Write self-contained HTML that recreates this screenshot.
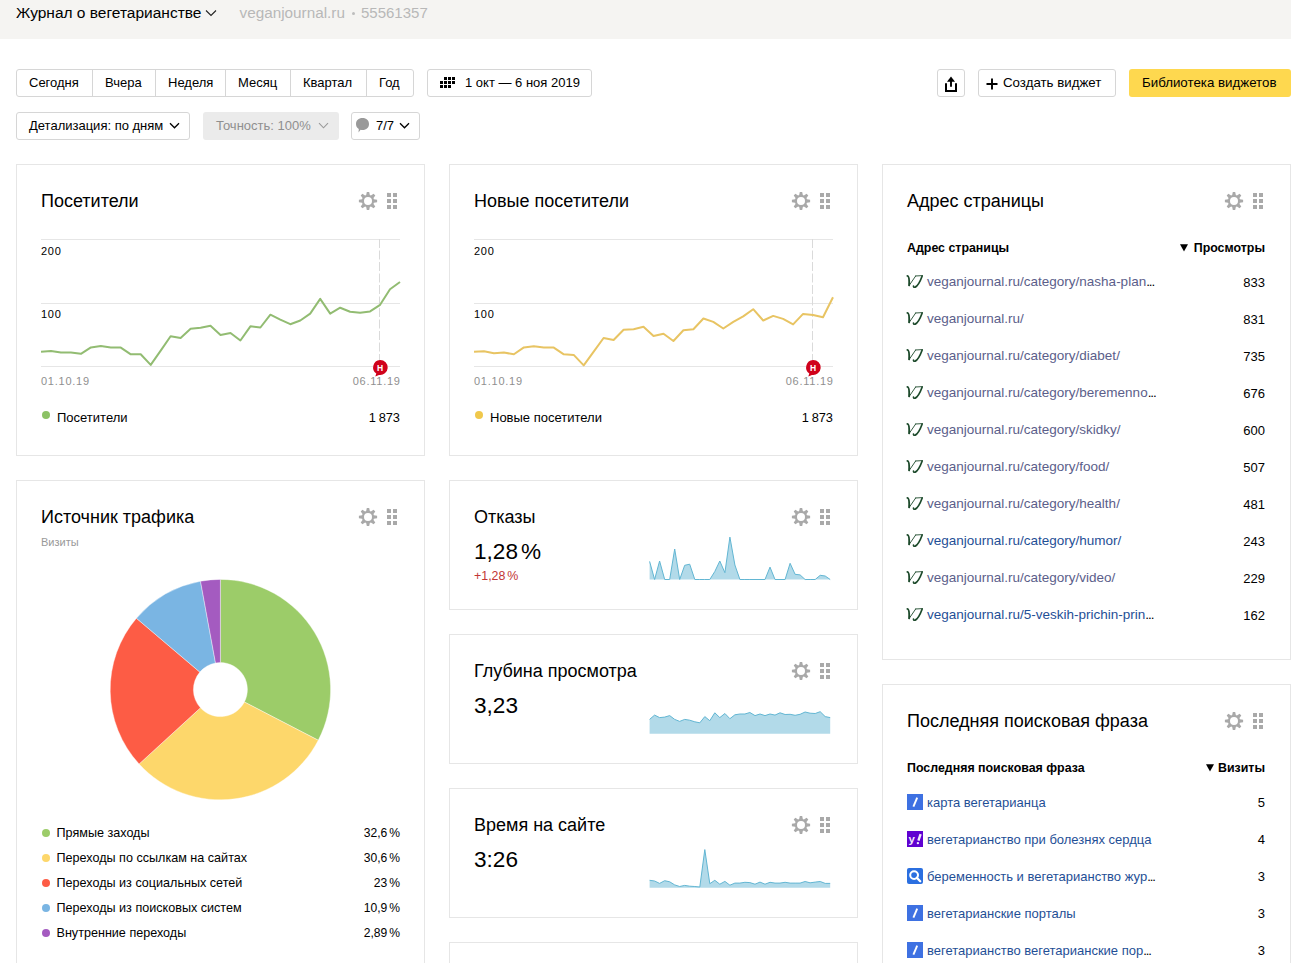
<!DOCTYPE html>
<html><head><meta charset="utf-8">
<style>
*{margin:0;padding:0;box-sizing:border-box}
html,body{width:1291px;height:963px;overflow:hidden;background:#fff}
body{position:relative;font-family:"Liberation Sans",sans-serif;color:#000}
.t{position:absolute;line-height:1;white-space:nowrap}
.r{text-align:right}
.hdr{position:absolute;left:0;top:0;width:1291px;height:39px;background:#f5f4f2}
.btn{position:absolute;height:28px;border:1px solid #d6d6d6;border-radius:3px;background:#fff}
.card{position:absolute;border:1px solid #e6e6e6;background:#fff}
.ttl{font-size:18px}
.gear{position:absolute;width:18px;height:18px}
.hand{position:absolute;width:10px;height:16px}
.grid{position:absolute;height:1px;background:#e6e6e6}
.ax{font-size:12px;font-family:"Liberation Sans",sans-serif}
.f13{font-size:13px}
.lnk{font-size:13px;color:#5b5f8b}
.lnkb{font-size:13px;color:#1f4f96}
.dot{position:absolute;width:8px;height:8px;border-radius:50%}
</style></head><body>
<div class="hdr"></div>
<div class="t" style="left:16px;top:5.2px;font-size:15.5px">Журнал о вегетарианстве</div>
<svg style="position:absolute;left:205px;top:9px" width="12" height="8" viewBox="0 0 12 8"><path d="M1,1.5 L6,6.5 L11,1.5" fill="none" stroke="#222" stroke-width="1.1"/></svg>
<div class="t" style="left:239.5px;top:5.2px;font-size:15.3px;color:#b8b8b8">veganjournal.ru</div><div style="position:absolute;left:351.5px;top:12px;width:3px;height:3px;border-radius:50%;background:#bdbdbd"></div><div class="t" style="left:361px;top:5.2px;font-size:15px;color:#b8b8b8">55561357</div>

<!-- row 1 buttons -->
<div class="btn" style="left:16px;top:69px;width:398px"></div>
<div style="position:absolute;left:92px;top:69px;width:1px;height:28px;background:#d6d6d6"></div>
<div style="position:absolute;left:155px;top:69px;width:1px;height:28px;background:#d6d6d6"></div>
<div style="position:absolute;left:225px;top:69px;width:1px;height:28px;background:#d6d6d6"></div>
<div style="position:absolute;left:290px;top:69px;width:1px;height:28px;background:#d6d6d6"></div>
<div style="position:absolute;left:366px;top:69px;width:1px;height:28px;background:#d6d6d6"></div>
<div class="t f13" style="left:29px;top:76px">Сегодня</div>
<div class="t f13" style="left:105px;top:76px">Вчера</div>
<div class="t f13" style="left:168px;top:76px">Неделя</div>
<div class="t f13" style="left:238px;top:76px">Месяц</div>
<div class="t f13" style="left:303px;top:76px">Квартал</div>
<div class="t f13" style="left:379px;top:76px">Год</div>

<div class="btn" style="left:427px;top:69px;width:165px"></div>
<svg style="position:absolute;left:440px;top:77px" width="15" height="11" viewBox="0 0 15 11"><g fill="#000"><rect x="4" y="0" width="3" height="3"/><rect x="8" y="0" width="3" height="3"/><rect x="12" y="0" width="3" height="3"/><rect x="0" y="4" width="3" height="3"/><rect x="4" y="4" width="3" height="3"/><rect x="8" y="4" width="3" height="3"/><rect x="12" y="4" width="3" height="3"/><rect x="0" y="8" width="3" height="3"/><rect x="4" y="8" width="3" height="3"/><rect x="8" y="8" width="3" height="3"/></g></svg>
<div class="t f13" style="left:465px;top:76px">1 окт — 6 ноя 2019</div>

<div class="btn" style="left:937px;top:69px;width:28px"></div>
<svg style="position:absolute;left:943px;top:74px" width="16" height="19" viewBox="0 0 16 19"><path d="M4,7.8 L8,2.6 L12,7.8 Z" fill="#000"/><path d="M8,7 V12.8" stroke="#000" stroke-width="1.9"/><path d="M3,9.3 V17 H13 V9.3" fill="none" stroke="#000" stroke-width="2"/></svg>
<div class="btn" style="left:978px;top:69px;width:138px"></div>
<svg style="position:absolute;left:986px;top:77.5px" width="12" height="12" viewBox="0 0 12 12"><path d="M6,0.5 V11.5 M0.5,6 H11.5" stroke="#000" stroke-width="1.9"/></svg>
<div class="t" style="left:1003px;top:75.8px;font-size:13.3px">Создать виджет</div>
<div style="position:absolute;left:1129px;top:69px;width:162px;height:28px;border-radius:3px;background:#fed84f"></div>
<div class="t" style="left:1142px;top:75.8px;font-size:13.3px">Библиотека виджетов</div>

<!-- row 2 -->
<div class="btn" style="left:16px;top:112px;width:174px"></div>
<div class="t f13" style="left:29px;top:119px">Детализация: по дням</div>
<svg style="position:absolute;left:169px;top:122px" width="12" height="8" viewBox="0 0 12 8"><path d="M1,1.2 L5.5,5.8 L10,1.2" fill="none" stroke="#000" stroke-width="1.3"/></svg>
<div style="position:absolute;left:203px;top:112px;width:136px;height:28px;border-radius:3px;background:#ebebeb"></div>
<div class="t f13" style="left:216px;top:119px;color:#8f8f8f">Точность: 100%</div>
<svg style="position:absolute;left:318px;top:122px" width="12" height="8" viewBox="0 0 12 8"><path d="M1,1.2 L5.5,5.8 L10,1.2" fill="none" stroke="#999" stroke-width="1.1"/></svg>
<div class="btn" style="left:351px;top:112px;width:69px"></div>
<svg style="position:absolute;left:355px;top:117px" width="16" height="18" viewBox="0 0 16 18"><path d="M7.5,1 C11.5,1 14,3.5 14,7 C14,10.5 11.5,13 7.5,13 C6.8,13 6.2,12.9 5.6,12.8 L3.5,15.5 L3.8,12 C2,11 1,9.2 1,7 C1,3.5 3.5,1 7.5,1 Z" fill="#999"/></svg>
<div class="t f13" style="left:376px;top:119px">7/7</div>
<svg style="position:absolute;left:399px;top:122px" width="12" height="8" viewBox="0 0 12 8"><path d="M1,1.2 L5.5,5.8 L10,1.2" fill="none" stroke="#000" stroke-width="1.3"/></svg>

<!-- CARDS START -->
<div class="card" style="left:16px;top:164px;width:409px;height:292px"></div>
<div class="t" style="top:191.76px;font-size:18px;left:41px;">Посетители</div>
<svg style="position:absolute;left:358px;top:191px" width="20" height="20" viewBox="0 0 20 20"><path d="M8.17,4.08 L8.81,0.88 L11.19,0.88 L11.83,4.08 L12.89,4.52 L15.61,2.71 L17.29,4.39 L15.48,7.11 L15.92,8.17 L19.12,8.81 L19.12,11.19 L15.92,11.83 L15.48,12.89 L17.29,15.61 L15.61,17.29 L12.89,15.48 L11.83,15.92 L11.19,19.12 L8.81,19.12 L8.17,15.92 L7.11,15.48 L4.39,17.29 L2.71,15.61 L4.52,12.89 L4.08,11.83 L0.88,11.19 L0.88,8.81 L4.08,8.17 L4.52,7.11 L2.71,4.39 L4.39,2.71 L7.11,4.52 Z M14.0,10 A4.0,4.0 0 1 0 6.0,10 A4.0,4.0 0 1 0 14.0,10 Z" fill="#a9a9a9" fill-rule="evenodd"/></svg><svg style="position:absolute;left:387px;top:193px" width="10" height="16" viewBox="0 0 10 16"><g fill="#a9a9a9"><rect x="0" y="0" width="4" height="4"/><rect x="6" y="0" width="4" height="4"/><rect x="0" y="6" width="4" height="4"/><rect x="6" y="6" width="4" height="4"/><rect x="0" y="12" width="4" height="4"/><rect x="6" y="12" width="4" height="4"/></g></svg>
<div class="grid" style="left:41px;top:239px;width:359px"></div>
<div class="grid" style="left:41px;top:303px;width:359px"></div>
<div class="grid" style="left:41px;top:366px;width:359px"></div>
<div class="t" style="top:245.69px;font-size:11px;left:41px;color:#000;letter-spacing:0.75px">200</div>
<div class="t" style="top:308.99px;font-size:11px;left:41px;color:#000;letter-spacing:0.75px">100</div>
<div class="t" style="top:375.99px;font-size:11px;left:41px;color:#8f8f8f;letter-spacing:0.75px">01.10.19</div>
<div class="t" style="top:375.99px;font-size:11px;right:890.3px;color:#8f8f8f;letter-spacing:0.75px">06.11.19</div>
<svg style="position:absolute;left:379px;top:239px" width="1" height="128"><line x1="0.5" y1="0" x2="0.5" y2="128" stroke="#dadada" stroke-dasharray="9,2.5"/></svg>
<svg style="position:absolute;left:41px;top:164px" width="362" height="220" viewBox="0 0 362 220"><polyline points="0.0,187.8 10.0,186.9 19.9,188.6 29.9,188.6 39.9,189.8 49.9,183.4 59.8,182.1 69.8,183.6 79.8,183.6 89.8,190.3 99.7,190.3 109.7,200.9 119.7,186.6 129.6,172.3 139.6,174.0 149.6,164.8 159.6,163.7 169.5,161.8 179.5,171.0 189.5,169.0 199.4,176.5 209.4,162.3 219.4,163.5 229.4,150.7 239.3,155.7 249.3,160.2 259.3,156.5 269.2,149.6 279.2,134.9 289.2,149.6 299.2,143.7 309.1,147.7 319.1,148.7 329.1,147.4 339.1,140.8 349.0,125.3 359.0,118.0" fill="none" stroke="#92bc72" stroke-width="2" stroke-linejoin="round"/></svg>
<svg style="position:absolute;left:371px;top:357.5px" width="18" height="20" viewBox="0 0 18 20"><path d="M9,2 A7.5,7.5 0 1 1 8,16.9 L4.3,18.6 L5.3,15.6 A7.5,7.5 0 0 1 9,2 Z" fill="#d0021b"/><text x="9" y="12.7" text-anchor="middle" font-family="Liberation Sans" font-weight="700" font-size="8.5" fill="#fff">Н</text></svg>
<div class="dot" style="left:42px;top:411px;background:#8cc265"></div>
<div class="t" style="top:411.00px;font-size:13px;left:57px;">Посетители</div>
<div class="t" style="top:412.16px;font-size:12.8px;right:891px;">1<span style="margin-left:2.8px">873</span></div>
<div class="card" style="left:449px;top:164px;width:409px;height:292px"></div>
<div class="t" style="top:191.76px;font-size:18px;left:474px;">Новые посетители</div>
<svg style="position:absolute;left:791px;top:191px" width="20" height="20" viewBox="0 0 20 20"><path d="M8.17,4.08 L8.81,0.88 L11.19,0.88 L11.83,4.08 L12.89,4.52 L15.61,2.71 L17.29,4.39 L15.48,7.11 L15.92,8.17 L19.12,8.81 L19.12,11.19 L15.92,11.83 L15.48,12.89 L17.29,15.61 L15.61,17.29 L12.89,15.48 L11.83,15.92 L11.19,19.12 L8.81,19.12 L8.17,15.92 L7.11,15.48 L4.39,17.29 L2.71,15.61 L4.52,12.89 L4.08,11.83 L0.88,11.19 L0.88,8.81 L4.08,8.17 L4.52,7.11 L2.71,4.39 L4.39,2.71 L7.11,4.52 Z M14.0,10 A4.0,4.0 0 1 0 6.0,10 A4.0,4.0 0 1 0 14.0,10 Z" fill="#a9a9a9" fill-rule="evenodd"/></svg><svg style="position:absolute;left:820px;top:193px" width="10" height="16" viewBox="0 0 10 16"><g fill="#a9a9a9"><rect x="0" y="0" width="4" height="4"/><rect x="6" y="0" width="4" height="4"/><rect x="0" y="6" width="4" height="4"/><rect x="6" y="6" width="4" height="4"/><rect x="0" y="12" width="4" height="4"/><rect x="6" y="12" width="4" height="4"/></g></svg>
<div class="grid" style="left:474px;top:239px;width:359px"></div>
<div class="grid" style="left:474px;top:303px;width:359px"></div>
<div class="grid" style="left:474px;top:366px;width:359px"></div>
<div class="t" style="top:245.69px;font-size:11px;left:474px;color:#000;letter-spacing:0.75px">200</div>
<div class="t" style="top:308.99px;font-size:11px;left:474px;color:#000;letter-spacing:0.75px">100</div>
<div class="t" style="top:375.99px;font-size:11px;left:474px;color:#8f8f8f;letter-spacing:0.75px">01.10.19</div>
<div class="t" style="top:375.99px;font-size:11px;right:457.29999999999995px;color:#8f8f8f;letter-spacing:0.75px">06.11.19</div>
<svg style="position:absolute;left:812px;top:239px" width="1" height="128"><line x1="0.5" y1="0" x2="0.5" y2="128" stroke="#dadada" stroke-dasharray="9,2.5"/></svg>
<svg style="position:absolute;left:474px;top:164px" width="362" height="220" viewBox="0 0 362 220"><polyline points="0.0,187.8 10.0,187.3 19.9,189.3 29.9,188.6 39.9,190.3 49.9,183.4 59.8,182.3 69.8,183.6 79.8,183.6 89.8,190.3 99.7,190.9 109.7,201.4 119.7,187.6 129.6,174.0 139.6,176.0 149.6,165.7 159.6,165.2 169.5,162.7 179.5,172.0 189.5,169.8 199.4,177.0 209.4,166.2 219.4,165.2 229.4,154.5 239.3,157.9 249.3,164.5 259.3,157.9 269.2,152.4 279.2,145.2 289.2,156.5 299.2,151.9 309.1,154.9 319.1,160.4 329.1,149.9 339.1,151.0 349.0,153.2 359.0,133.3" fill="none" stroke="#e8c463" stroke-width="2" stroke-linejoin="round"/></svg>
<svg style="position:absolute;left:804px;top:357.5px" width="18" height="20" viewBox="0 0 18 20"><path d="M9,2 A7.5,7.5 0 1 1 8,16.9 L4.3,18.6 L5.3,15.6 A7.5,7.5 0 0 1 9,2 Z" fill="#d0021b"/><text x="9" y="12.7" text-anchor="middle" font-family="Liberation Sans" font-weight="700" font-size="8.5" fill="#fff">Н</text></svg>
<div class="dot" style="left:475px;top:411px;background:#f0c84c"></div>
<div class="t" style="top:411.00px;font-size:13px;left:490px;">Новые посетители</div>
<div class="t" style="top:412.16px;font-size:12.8px;right:458px;">1<span style="margin-left:2.8px">873</span></div>
<div class="card" style="left:882px;top:164px;width:409px;height:496px"></div>
<div class="t" style="top:191.76px;font-size:18px;left:907px;">Адрес страницы</div>
<svg style="position:absolute;left:1224px;top:191px" width="20" height="20" viewBox="0 0 20 20"><path d="M8.17,4.08 L8.81,0.88 L11.19,0.88 L11.83,4.08 L12.89,4.52 L15.61,2.71 L17.29,4.39 L15.48,7.11 L15.92,8.17 L19.12,8.81 L19.12,11.19 L15.92,11.83 L15.48,12.89 L17.29,15.61 L15.61,17.29 L12.89,15.48 L11.83,15.92 L11.19,19.12 L8.81,19.12 L8.17,15.92 L7.11,15.48 L4.39,17.29 L2.71,15.61 L4.52,12.89 L4.08,11.83 L0.88,11.19 L0.88,8.81 L4.08,8.17 L4.52,7.11 L2.71,4.39 L4.39,2.71 L7.11,4.52 Z M14.0,10 A4.0,4.0 0 1 0 6.0,10 A4.0,4.0 0 1 0 14.0,10 Z" fill="#a9a9a9" fill-rule="evenodd"/></svg><svg style="position:absolute;left:1253px;top:193px" width="10" height="16" viewBox="0 0 10 16"><g fill="#a9a9a9"><rect x="0" y="0" width="4" height="4"/><rect x="6" y="0" width="4" height="4"/><rect x="0" y="6" width="4" height="4"/><rect x="6" y="6" width="4" height="4"/><rect x="0" y="12" width="4" height="4"/><rect x="6" y="12" width="4" height="4"/></g></svg>
<div class="t" style="top:241.50px;font-size:12.4px;left:907px;font-weight:700;">Адрес страницы</div>
<div class="t" style="top:241.50px;font-size:12.4px;right:26px;font-weight:700;">Просмотры</div>
<svg style="position:absolute;left:1180px;top:244px" width="8" height="8" viewBox="0 0 8 8"><path d="M0,0.3 H8 L4,7.6 Z" fill="#000"/></svg>
<svg style="position:absolute;left:906px;top:274.0px" width="18" height="16" viewBox="0 0 18 16"><g fill="none" stroke="#1d4a2b" stroke-linecap="round"><path d="M1.4,1.9 Q3.6,2.2 3.1,11.4" stroke-width="1.9"/><path d="M3.2,11.4 L9.6,2.1" stroke-width="0.9"/><path d="M9.4,2.0 L16.6,1.6" stroke-width="0.9"/><path d="M16.1,2.2 Q12.6,11.6 9.2,13.1 Q7.6,13.6 7.5,12.2" stroke-width="1.7"/></g></svg>
<div class="t" style="top:275.07px;font-size:13.5px;left:927px;color:#5b5e8a;">veganjournal.ru/category/nasha-plan<span style="letter-spacing:-1.1px;color:#000">...</span></div>
<div class="t" style="top:275.50px;font-size:13px;right:26px;">833</div>
<svg style="position:absolute;left:906px;top:311.0px" width="18" height="16" viewBox="0 0 18 16"><g fill="none" stroke="#1d4a2b" stroke-linecap="round"><path d="M1.4,1.9 Q3.6,2.2 3.1,11.4" stroke-width="1.9"/><path d="M3.2,11.4 L9.6,2.1" stroke-width="0.9"/><path d="M9.4,2.0 L16.6,1.6" stroke-width="0.9"/><path d="M16.1,2.2 Q12.6,11.6 9.2,13.1 Q7.6,13.6 7.5,12.2" stroke-width="1.7"/></g></svg>
<div class="t" style="top:312.07px;font-size:13.5px;left:927px;color:#5b5e8a;">veganjournal.ru/</div>
<div class="t" style="top:312.50px;font-size:13px;right:26px;">831</div>
<svg style="position:absolute;left:906px;top:348.0px" width="18" height="16" viewBox="0 0 18 16"><g fill="none" stroke="#1d4a2b" stroke-linecap="round"><path d="M1.4,1.9 Q3.6,2.2 3.1,11.4" stroke-width="1.9"/><path d="M3.2,11.4 L9.6,2.1" stroke-width="0.9"/><path d="M9.4,2.0 L16.6,1.6" stroke-width="0.9"/><path d="M16.1,2.2 Q12.6,11.6 9.2,13.1 Q7.6,13.6 7.5,12.2" stroke-width="1.7"/></g></svg>
<div class="t" style="top:349.07px;font-size:13.5px;left:927px;color:#5b5e8a;">veganjournal.ru/category/diabet/</div>
<div class="t" style="top:349.50px;font-size:13px;right:26px;">735</div>
<svg style="position:absolute;left:906px;top:385.0px" width="18" height="16" viewBox="0 0 18 16"><g fill="none" stroke="#1d4a2b" stroke-linecap="round"><path d="M1.4,1.9 Q3.6,2.2 3.1,11.4" stroke-width="1.9"/><path d="M3.2,11.4 L9.6,2.1" stroke-width="0.9"/><path d="M9.4,2.0 L16.6,1.6" stroke-width="0.9"/><path d="M16.1,2.2 Q12.6,11.6 9.2,13.1 Q7.6,13.6 7.5,12.2" stroke-width="1.7"/></g></svg>
<div class="t" style="top:386.07px;font-size:13.5px;left:927px;color:#5b5e8a;">veganjournal.ru/category/beremenno<span style="letter-spacing:-1.1px;color:#000">...</span></div>
<div class="t" style="top:386.50px;font-size:13px;right:26px;">676</div>
<svg style="position:absolute;left:906px;top:422.0px" width="18" height="16" viewBox="0 0 18 16"><g fill="none" stroke="#1d4a2b" stroke-linecap="round"><path d="M1.4,1.9 Q3.6,2.2 3.1,11.4" stroke-width="1.9"/><path d="M3.2,11.4 L9.6,2.1" stroke-width="0.9"/><path d="M9.4,2.0 L16.6,1.6" stroke-width="0.9"/><path d="M16.1,2.2 Q12.6,11.6 9.2,13.1 Q7.6,13.6 7.5,12.2" stroke-width="1.7"/></g></svg>
<div class="t" style="top:423.07px;font-size:13.5px;left:927px;color:#5b5e8a;">veganjournal.ru/category/skidky/</div>
<div class="t" style="top:423.50px;font-size:13px;right:26px;">600</div>
<svg style="position:absolute;left:906px;top:459.0px" width="18" height="16" viewBox="0 0 18 16"><g fill="none" stroke="#1d4a2b" stroke-linecap="round"><path d="M1.4,1.9 Q3.6,2.2 3.1,11.4" stroke-width="1.9"/><path d="M3.2,11.4 L9.6,2.1" stroke-width="0.9"/><path d="M9.4,2.0 L16.6,1.6" stroke-width="0.9"/><path d="M16.1,2.2 Q12.6,11.6 9.2,13.1 Q7.6,13.6 7.5,12.2" stroke-width="1.7"/></g></svg>
<div class="t" style="top:460.07px;font-size:13.5px;left:927px;color:#5b5e8a;">veganjournal.ru/category/food/</div>
<div class="t" style="top:460.50px;font-size:13px;right:26px;">507</div>
<svg style="position:absolute;left:906px;top:496.0px" width="18" height="16" viewBox="0 0 18 16"><g fill="none" stroke="#1d4a2b" stroke-linecap="round"><path d="M1.4,1.9 Q3.6,2.2 3.1,11.4" stroke-width="1.9"/><path d="M3.2,11.4 L9.6,2.1" stroke-width="0.9"/><path d="M9.4,2.0 L16.6,1.6" stroke-width="0.9"/><path d="M16.1,2.2 Q12.6,11.6 9.2,13.1 Q7.6,13.6 7.5,12.2" stroke-width="1.7"/></g></svg>
<div class="t" style="top:497.07px;font-size:13.5px;left:927px;color:#5b5e8a;">veganjournal.ru/category/health/</div>
<div class="t" style="top:497.50px;font-size:13px;right:26px;">481</div>
<svg style="position:absolute;left:906px;top:533.0px" width="18" height="16" viewBox="0 0 18 16"><g fill="none" stroke="#1d4a2b" stroke-linecap="round"><path d="M1.4,1.9 Q3.6,2.2 3.1,11.4" stroke-width="1.9"/><path d="M3.2,11.4 L9.6,2.1" stroke-width="0.9"/><path d="M9.4,2.0 L16.6,1.6" stroke-width="0.9"/><path d="M16.1,2.2 Q12.6,11.6 9.2,13.1 Q7.6,13.6 7.5,12.2" stroke-width="1.7"/></g></svg>
<div class="t" style="top:534.07px;font-size:13.5px;left:927px;color:#1f4f96;">veganjournal.ru/category/humor/</div>
<div class="t" style="top:534.50px;font-size:13px;right:26px;">243</div>
<svg style="position:absolute;left:906px;top:570.0px" width="18" height="16" viewBox="0 0 18 16"><g fill="none" stroke="#1d4a2b" stroke-linecap="round"><path d="M1.4,1.9 Q3.6,2.2 3.1,11.4" stroke-width="1.9"/><path d="M3.2,11.4 L9.6,2.1" stroke-width="0.9"/><path d="M9.4,2.0 L16.6,1.6" stroke-width="0.9"/><path d="M16.1,2.2 Q12.6,11.6 9.2,13.1 Q7.6,13.6 7.5,12.2" stroke-width="1.7"/></g></svg>
<div class="t" style="top:571.07px;font-size:13.5px;left:927px;color:#5b5e8a;">veganjournal.ru/category/video/</div>
<div class="t" style="top:571.50px;font-size:13px;right:26px;">229</div>
<svg style="position:absolute;left:906px;top:607.0px" width="18" height="16" viewBox="0 0 18 16"><g fill="none" stroke="#1d4a2b" stroke-linecap="round"><path d="M1.4,1.9 Q3.6,2.2 3.1,11.4" stroke-width="1.9"/><path d="M3.2,11.4 L9.6,2.1" stroke-width="0.9"/><path d="M9.4,2.0 L16.6,1.6" stroke-width="0.9"/><path d="M16.1,2.2 Q12.6,11.6 9.2,13.1 Q7.6,13.6 7.5,12.2" stroke-width="1.7"/></g></svg>
<div class="t" style="top:608.07px;font-size:13.5px;left:927px;color:#1f4f96;">veganjournal.ru/5-veskih-prichin-prin<span style="letter-spacing:-1.1px;color:#000">...</span></div>
<div class="t" style="top:608.50px;font-size:13px;right:26px;">162</div>
<div class="card" style="left:882px;top:684px;width:409px;height:300px"></div>
<div class="t" style="top:711.76px;font-size:18px;left:907px;">Последняя поисковая фраза</div>
<svg style="position:absolute;left:1224px;top:711px" width="20" height="20" viewBox="0 0 20 20"><path d="M8.17,4.08 L8.81,0.88 L11.19,0.88 L11.83,4.08 L12.89,4.52 L15.61,2.71 L17.29,4.39 L15.48,7.11 L15.92,8.17 L19.12,8.81 L19.12,11.19 L15.92,11.83 L15.48,12.89 L17.29,15.61 L15.61,17.29 L12.89,15.48 L11.83,15.92 L11.19,19.12 L8.81,19.12 L8.17,15.92 L7.11,15.48 L4.39,17.29 L2.71,15.61 L4.52,12.89 L4.08,11.83 L0.88,11.19 L0.88,8.81 L4.08,8.17 L4.52,7.11 L2.71,4.39 L4.39,2.71 L7.11,4.52 Z M14.0,10 A4.0,4.0 0 1 0 6.0,10 A4.0,4.0 0 1 0 14.0,10 Z" fill="#a9a9a9" fill-rule="evenodd"/></svg><svg style="position:absolute;left:1253px;top:713px" width="10" height="16" viewBox="0 0 10 16"><g fill="#a9a9a9"><rect x="0" y="0" width="4" height="4"/><rect x="6" y="0" width="4" height="4"/><rect x="0" y="6" width="4" height="4"/><rect x="6" y="6" width="4" height="4"/><rect x="0" y="12" width="4" height="4"/><rect x="6" y="12" width="4" height="4"/></g></svg>
<div class="t" style="top:761.50px;font-size:12.4px;left:907px;font-weight:700;">Последняя поисковая фраза</div>
<div class="t" style="top:761.50px;font-size:12.4px;right:26px;font-weight:700;">Визиты</div>
<svg style="position:absolute;left:1206px;top:764px" width="8" height="8" viewBox="0 0 8 8"><path d="M0,0.3 H8 L4,7.6 Z" fill="#000"/></svg>
<svg style="position:absolute;left:907px;top:794.0px" width="16" height="16" viewBox="0 0 16 16"><rect width="16" height="16" fill="#3e71e2"/><path d="M10.2,3.6 L6.4,12.6" stroke="#fff" stroke-width="1.9"/></svg>
<div class="t" style="top:795.50px;font-size:13px;left:927px;color:#1f4f96;">карта вегетарианца</div>
<div class="t" style="top:795.50px;font-size:13px;right:26px;">5</div>
<svg style="position:absolute;left:907px;top:831.0px" width="16" height="16" viewBox="0 0 16 16"><rect width="16" height="16" fill="#5f01d1"/><text x="1.6" y="12.2" font-family="Liberation Sans" font-weight="700" font-size="11.5" fill="#f0e8fa">y</text><path d="M13.6,3.2 L11.4,9.6" stroke="#f0e8fa" stroke-width="2.4"/><circle cx="10.9" cy="12.1" r="1.2" fill="#f0e8fa"/></svg>
<div class="t" style="top:832.50px;font-size:13px;left:927px;color:#1f4f96;">вегетарианство при болезнях сердца</div>
<div class="t" style="top:832.50px;font-size:13px;right:26px;">4</div>
<svg style="position:absolute;left:907px;top:868.0px" width="16" height="16" viewBox="0 0 16 16"><rect width="16" height="16" rx="2" fill="#2b6fe0"/><circle cx="7.1" cy="7.1" r="3.9" fill="none" stroke="#fff" stroke-width="2"/><path d="M9.8,9.8 L13.2,13.2" stroke="#fff" stroke-width="2.3" stroke-linecap="round"/></svg>
<div class="t" style="top:869.50px;font-size:13px;left:927px;color:#1f4f96;">беременность и вегетарианство жур<span style="letter-spacing:-1.1px;color:#000">...</span></div>
<div class="t" style="top:869.50px;font-size:13px;right:26px;">3</div>
<svg style="position:absolute;left:907px;top:905.0px" width="16" height="16" viewBox="0 0 16 16"><rect width="16" height="16" fill="#3e71e2"/><path d="M10.2,3.6 L6.4,12.6" stroke="#fff" stroke-width="1.9"/></svg>
<div class="t" style="top:906.50px;font-size:13px;left:927px;color:#1f4f96;">вегетарианские порталы</div>
<div class="t" style="top:906.50px;font-size:13px;right:26px;">3</div>
<svg style="position:absolute;left:907px;top:942.0px" width="16" height="16" viewBox="0 0 16 16"><rect width="16" height="16" fill="#3e71e2"/><path d="M10.2,3.6 L6.4,12.6" stroke="#fff" stroke-width="1.9"/></svg>
<div class="t" style="top:943.50px;font-size:13px;left:927px;color:#1f4f96;">вегетарианство вегетарианские пор<span style="letter-spacing:-1.1px;color:#000">...</span></div>
<div class="t" style="top:943.50px;font-size:13px;right:26px;">3</div>
<div class="card" style="left:16px;top:480px;width:409px;height:500px"></div>
<div class="t" style="top:507.76px;font-size:18px;left:41px;">Источник трафика</div>
<svg style="position:absolute;left:358px;top:507px" width="20" height="20" viewBox="0 0 20 20"><path d="M8.17,4.08 L8.81,0.88 L11.19,0.88 L11.83,4.08 L12.89,4.52 L15.61,2.71 L17.29,4.39 L15.48,7.11 L15.92,8.17 L19.12,8.81 L19.12,11.19 L15.92,11.83 L15.48,12.89 L17.29,15.61 L15.61,17.29 L12.89,15.48 L11.83,15.92 L11.19,19.12 L8.81,19.12 L8.17,15.92 L7.11,15.48 L4.39,17.29 L2.71,15.61 L4.52,12.89 L4.08,11.83 L0.88,11.19 L0.88,8.81 L4.08,8.17 L4.52,7.11 L2.71,4.39 L4.39,2.71 L7.11,4.52 Z M14.0,10 A4.0,4.0 0 1 0 6.0,10 A4.0,4.0 0 1 0 14.0,10 Z" fill="#a9a9a9" fill-rule="evenodd"/></svg><svg style="position:absolute;left:387px;top:509px" width="10" height="16" viewBox="0 0 10 16"><g fill="#a9a9a9"><rect x="0" y="0" width="4" height="4"/><rect x="6" y="0" width="4" height="4"/><rect x="0" y="6" width="4" height="4"/><rect x="6" y="6" width="4" height="4"/><rect x="0" y="12" width="4" height="4"/><rect x="6" y="12" width="4" height="4"/></g></svg>
<div class="t" style="top:536.69px;font-size:11px;left:41px;color:#999;">Визиты</div>
<svg style="position:absolute;left:16px;top:480px" width="409" height="330" viewBox="0 0 409 330"><g stroke="#fff" stroke-width="0.4"><path d="M204.40,99.40 A110.2,110.2 0 0 1 302.26,260.27 L228.38,222.01 A27,27 0 0 0 204.40,182.60 Z" fill="#9ccc69"/>
<path d="M302.26,260.27 A110.2,110.2 0 0 1 123.10,283.99 L184.48,227.83 A27,27 0 0 0 228.38,222.01 Z" fill="#fdd76b"/>
<path d="M123.10,283.99 A110.2,110.2 0 0 1 120.42,138.25 L183.82,192.12 A27,27 0 0 0 184.48,227.83 Z" fill="#fd5c45"/>
<path d="M120.42,138.25 A110.2,110.2 0 0 1 184.50,101.21 L199.52,183.04 A27,27 0 0 0 183.82,192.12 Z" fill="#7ab5e3"/>
<path d="M184.50,101.21 A110.2,110.2 0 0 1 204.40,99.40 L204.40,182.60 A27,27 0 0 0 199.52,183.04 Z" fill="#a45bc0"/></g></svg>
<div class="dot" style="left:42px;top:828.8px;background:#9ccc69"></div>
<div class="t" style="top:827.23px;font-size:12.6px;left:56.5px;">Прямые заходы</div>
<div class="t" style="top:827.06px;font-size:12.1px;right:891px;">32,6<span style="margin-left:2px">%</span></div>
<div class="dot" style="left:42px;top:853.8px;background:#fdd76b"></div>
<div class="t" style="top:852.23px;font-size:12.6px;left:56.5px;">Переходы по ссылкам на сайтах</div>
<div class="t" style="top:852.06px;font-size:12.1px;right:891px;">30,6<span style="margin-left:2px">%</span></div>
<div class="dot" style="left:42px;top:878.8px;background:#fd5c45"></div>
<div class="t" style="top:877.23px;font-size:12.6px;left:56.5px;">Переходы из социальных сетей</div>
<div class="t" style="top:877.06px;font-size:12.1px;right:891px;">23<span style="margin-left:2px">%</span></div>
<div class="dot" style="left:42px;top:903.8px;background:#7ab5e3"></div>
<div class="t" style="top:902.23px;font-size:12.6px;left:56.5px;">Переходы из поисковых систем</div>
<div class="t" style="top:902.06px;font-size:12.1px;right:891px;">10,9<span style="margin-left:2px">%</span></div>
<div class="dot" style="left:42px;top:928.8px;background:#a45bc0"></div>
<div class="t" style="top:927.23px;font-size:12.6px;left:56.5px;">Внутренние переходы</div>
<div class="t" style="top:927.06px;font-size:12.1px;right:891px;">2,89<span style="margin-left:2px">%</span></div>
<div class="card" style="left:449px;top:480px;width:409px;height:130px"></div>
<div class="t" style="top:507.76px;font-size:18px;left:474px;">Отказы</div>
<svg style="position:absolute;left:791px;top:507px" width="20" height="20" viewBox="0 0 20 20"><path d="M8.17,4.08 L8.81,0.88 L11.19,0.88 L11.83,4.08 L12.89,4.52 L15.61,2.71 L17.29,4.39 L15.48,7.11 L15.92,8.17 L19.12,8.81 L19.12,11.19 L15.92,11.83 L15.48,12.89 L17.29,15.61 L15.61,17.29 L12.89,15.48 L11.83,15.92 L11.19,19.12 L8.81,19.12 L8.17,15.92 L7.11,15.48 L4.39,17.29 L2.71,15.61 L4.52,12.89 L4.08,11.83 L0.88,11.19 L0.88,8.81 L4.08,8.17 L4.52,7.11 L2.71,4.39 L4.39,2.71 L7.11,4.52 Z M14.0,10 A4.0,4.0 0 1 0 6.0,10 A4.0,4.0 0 1 0 14.0,10 Z" fill="#a9a9a9" fill-rule="evenodd"/></svg><svg style="position:absolute;left:820px;top:509px" width="10" height="16" viewBox="0 0 10 16"><g fill="#a9a9a9"><rect x="0" y="0" width="4" height="4"/><rect x="6" y="0" width="4" height="4"/><rect x="0" y="6" width="4" height="4"/><rect x="6" y="6" width="4" height="4"/><rect x="0" y="12" width="4" height="4"/><rect x="6" y="12" width="4" height="4"/></g></svg>
<div class="t" style="top:541.47px;font-size:22.6px;left:474px;">1,28<span style="margin-left:3px">%</span></div>
<div class="t" style="top:570.30px;font-size:12.4px;left:474px;color:#c23434;">+1,28<span style="margin-left:2px">%</span></div>
<svg style="position:absolute;left:449px;top:480px" width="409" height="130" viewBox="0 0 409 130"><path d="M200.6,99.5 L200.6,81.4 L205.6,99.5 L210.6,81.0 L215.7,99.5 L220.7,99.5 L225.7,69.0 L230.7,99.5 L235.7,85.3 L240.7,84.2 L245.8,99.5 L250.8,99.5 L255.8,99.5 L260.8,99.5 L265.8,91.5 L270.8,81.0 L275.9,92.7 L280.9,57.1 L285.9,85.0 L290.9,99.5 L295.9,99.5 L300.9,99.5 L306.0,99.5 L311.0,99.5 L316.0,99.5 L321.0,87.1 L326.0,99.5 L331.0,99.5 L336.1,99.5 L341.1,83.3 L346.1,94.3 L351.1,94.9 L356.1,99.5 L361.1,99.5 L366.2,99.5 L371.2,95.3 L376.2,96.0 L381.2,99.5 L381.2,99.5 Z" fill="#b2dae9"/><path d="M200.6,81.4 L205.6,99.5 L210.6,81.0 L215.7,99.5 L220.7,99.5 L225.7,69.0 L230.7,99.5 L235.7,85.3 L240.7,84.2 L245.8,99.5 L250.8,99.5 L255.8,99.5 L260.8,99.5 L265.8,91.5 L270.8,81.0 L275.9,92.7 L280.9,57.1 L285.9,85.0 L290.9,99.5 L295.9,99.5 L300.9,99.5 L306.0,99.5 L311.0,99.5 L316.0,99.5 L321.0,87.1 L326.0,99.5 L331.0,99.5 L336.1,99.5 L341.1,83.3 L346.1,94.3 L351.1,94.9 L356.1,99.5 L361.1,99.5 L366.2,99.5 L371.2,95.3 L376.2,96.0 L381.2,99.5" fill="none" stroke="#62b6d3" stroke-width="1"/></svg>
<div class="card" style="left:449px;top:634px;width:409px;height:130px"></div>
<div class="t" style="top:661.76px;font-size:18px;left:474px;">Глубина просмотра</div>
<svg style="position:absolute;left:791px;top:661px" width="20" height="20" viewBox="0 0 20 20"><path d="M8.17,4.08 L8.81,0.88 L11.19,0.88 L11.83,4.08 L12.89,4.52 L15.61,2.71 L17.29,4.39 L15.48,7.11 L15.92,8.17 L19.12,8.81 L19.12,11.19 L15.92,11.83 L15.48,12.89 L17.29,15.61 L15.61,17.29 L12.89,15.48 L11.83,15.92 L11.19,19.12 L8.81,19.12 L8.17,15.92 L7.11,15.48 L4.39,17.29 L2.71,15.61 L4.52,12.89 L4.08,11.83 L0.88,11.19 L0.88,8.81 L4.08,8.17 L4.52,7.11 L2.71,4.39 L4.39,2.71 L7.11,4.52 Z M14.0,10 A4.0,4.0 0 1 0 6.0,10 A4.0,4.0 0 1 0 14.0,10 Z" fill="#a9a9a9" fill-rule="evenodd"/></svg><svg style="position:absolute;left:820px;top:663px" width="10" height="16" viewBox="0 0 10 16"><g fill="#a9a9a9"><rect x="0" y="0" width="4" height="4"/><rect x="6" y="0" width="4" height="4"/><rect x="0" y="6" width="4" height="4"/><rect x="6" y="6" width="4" height="4"/><rect x="0" y="12" width="4" height="4"/><rect x="6" y="12" width="4" height="4"/></g></svg>
<div class="t" style="top:695.47px;font-size:22.6px;left:474px;">3,23</div>
<svg style="position:absolute;left:449px;top:634px" width="409" height="130" viewBox="0 0 409 130"><path d="M200.6,99.8 L200.6,85.4 L205.6,81.1 L210.6,83.6 L215.7,83.1 L220.7,81.6 L225.7,85.4 L230.7,87.4 L235.7,85.4 L240.7,86.2 L245.8,87.8 L250.8,88.8 L255.8,82.6 L260.8,86.7 L265.8,78.8 L270.8,83.6 L275.9,79.5 L280.9,84.7 L285.9,80.8 L290.9,80.0 L295.9,80.0 L300.9,78.5 L306.0,81.6 L311.0,80.0 L316.0,81.6 L321.0,80.0 L326.0,81.1 L331.0,78.8 L336.1,80.5 L341.1,80.3 L346.1,81.3 L351.1,80.3 L356.1,78.0 L361.1,79.2 L366.2,79.5 L371.2,77.7 L376.2,82.6 L381.2,83.6 L381.2,99.8 Z" fill="#b2dae9"/><path d="M200.6,85.4 L205.6,81.1 L210.6,83.6 L215.7,83.1 L220.7,81.6 L225.7,85.4 L230.7,87.4 L235.7,85.4 L240.7,86.2 L245.8,87.8 L250.8,88.8 L255.8,82.6 L260.8,86.7 L265.8,78.8 L270.8,83.6 L275.9,79.5 L280.9,84.7 L285.9,80.8 L290.9,80.0 L295.9,80.0 L300.9,78.5 L306.0,81.6 L311.0,80.0 L316.0,81.6 L321.0,80.0 L326.0,81.1 L331.0,78.8 L336.1,80.5 L341.1,80.3 L346.1,81.3 L351.1,80.3 L356.1,78.0 L361.1,79.2 L366.2,79.5 L371.2,77.7 L376.2,82.6 L381.2,83.6" fill="none" stroke="#62b6d3" stroke-width="1"/></svg>
<div class="card" style="left:449px;top:788px;width:409px;height:130px"></div>
<div class="t" style="top:815.76px;font-size:18px;left:474px;">Время на сайте</div>
<svg style="position:absolute;left:791px;top:815px" width="20" height="20" viewBox="0 0 20 20"><path d="M8.17,4.08 L8.81,0.88 L11.19,0.88 L11.83,4.08 L12.89,4.52 L15.61,2.71 L17.29,4.39 L15.48,7.11 L15.92,8.17 L19.12,8.81 L19.12,11.19 L15.92,11.83 L15.48,12.89 L17.29,15.61 L15.61,17.29 L12.89,15.48 L11.83,15.92 L11.19,19.12 L8.81,19.12 L8.17,15.92 L7.11,15.48 L4.39,17.29 L2.71,15.61 L4.52,12.89 L4.08,11.83 L0.88,11.19 L0.88,8.81 L4.08,8.17 L4.52,7.11 L2.71,4.39 L4.39,2.71 L7.11,4.52 Z M14.0,10 A4.0,4.0 0 1 0 6.0,10 A4.0,4.0 0 1 0 14.0,10 Z" fill="#a9a9a9" fill-rule="evenodd"/></svg><svg style="position:absolute;left:820px;top:817px" width="10" height="16" viewBox="0 0 10 16"><g fill="#a9a9a9"><rect x="0" y="0" width="4" height="4"/><rect x="6" y="0" width="4" height="4"/><rect x="0" y="6" width="4" height="4"/><rect x="6" y="6" width="4" height="4"/><rect x="0" y="12" width="4" height="4"/><rect x="6" y="12" width="4" height="4"/></g></svg>
<div class="t" style="top:849.47px;font-size:22.6px;left:474px;">3:26</div>
<svg style="position:absolute;left:449px;top:788px" width="409" height="130" viewBox="0 0 409 130"><path d="M200.6,99.7 L200.6,92.3 L205.6,93.0 L210.6,95.4 L215.7,92.7 L220.7,93.8 L225.7,96.9 L230.7,98.5 L235.7,97.4 L240.7,98.2 L245.8,98.5 L250.8,99.0 L255.8,61.6 L260.8,95.7 L265.8,92.3 L270.8,96.2 L275.9,93.4 L280.9,97.2 L285.9,95.1 L290.9,95.1 L295.9,94.3 L300.9,94.6 L306.0,96.2 L311.0,94.1 L316.0,96.2 L321.0,94.3 L326.0,95.1 L331.0,95.1 L336.1,94.3 L341.1,95.1 L346.1,95.1 L351.1,95.1 L356.1,93.5 L361.1,94.8 L366.2,94.1 L371.2,93.5 L376.2,95.4 L381.2,95.4 L381.2,99.7 Z" fill="#b2dae9"/><path d="M200.6,92.3 L205.6,93.0 L210.6,95.4 L215.7,92.7 L220.7,93.8 L225.7,96.9 L230.7,98.5 L235.7,97.4 L240.7,98.2 L245.8,98.5 L250.8,99.0 L255.8,61.6 L260.8,95.7 L265.8,92.3 L270.8,96.2 L275.9,93.4 L280.9,97.2 L285.9,95.1 L290.9,95.1 L295.9,94.3 L300.9,94.6 L306.0,96.2 L311.0,94.1 L316.0,96.2 L321.0,94.3 L326.0,95.1 L331.0,95.1 L336.1,94.3 L341.1,95.1 L346.1,95.1 L351.1,95.1 L356.1,93.5 L361.1,94.8 L366.2,94.1 L371.2,93.5 L376.2,95.4 L381.2,95.4" fill="none" stroke="#62b6d3" stroke-width="1"/></svg>
<div class="card" style="left:449px;top:942px;width:409px;height:100px"></div>
<!-- CARDS END -->
</body></html>
